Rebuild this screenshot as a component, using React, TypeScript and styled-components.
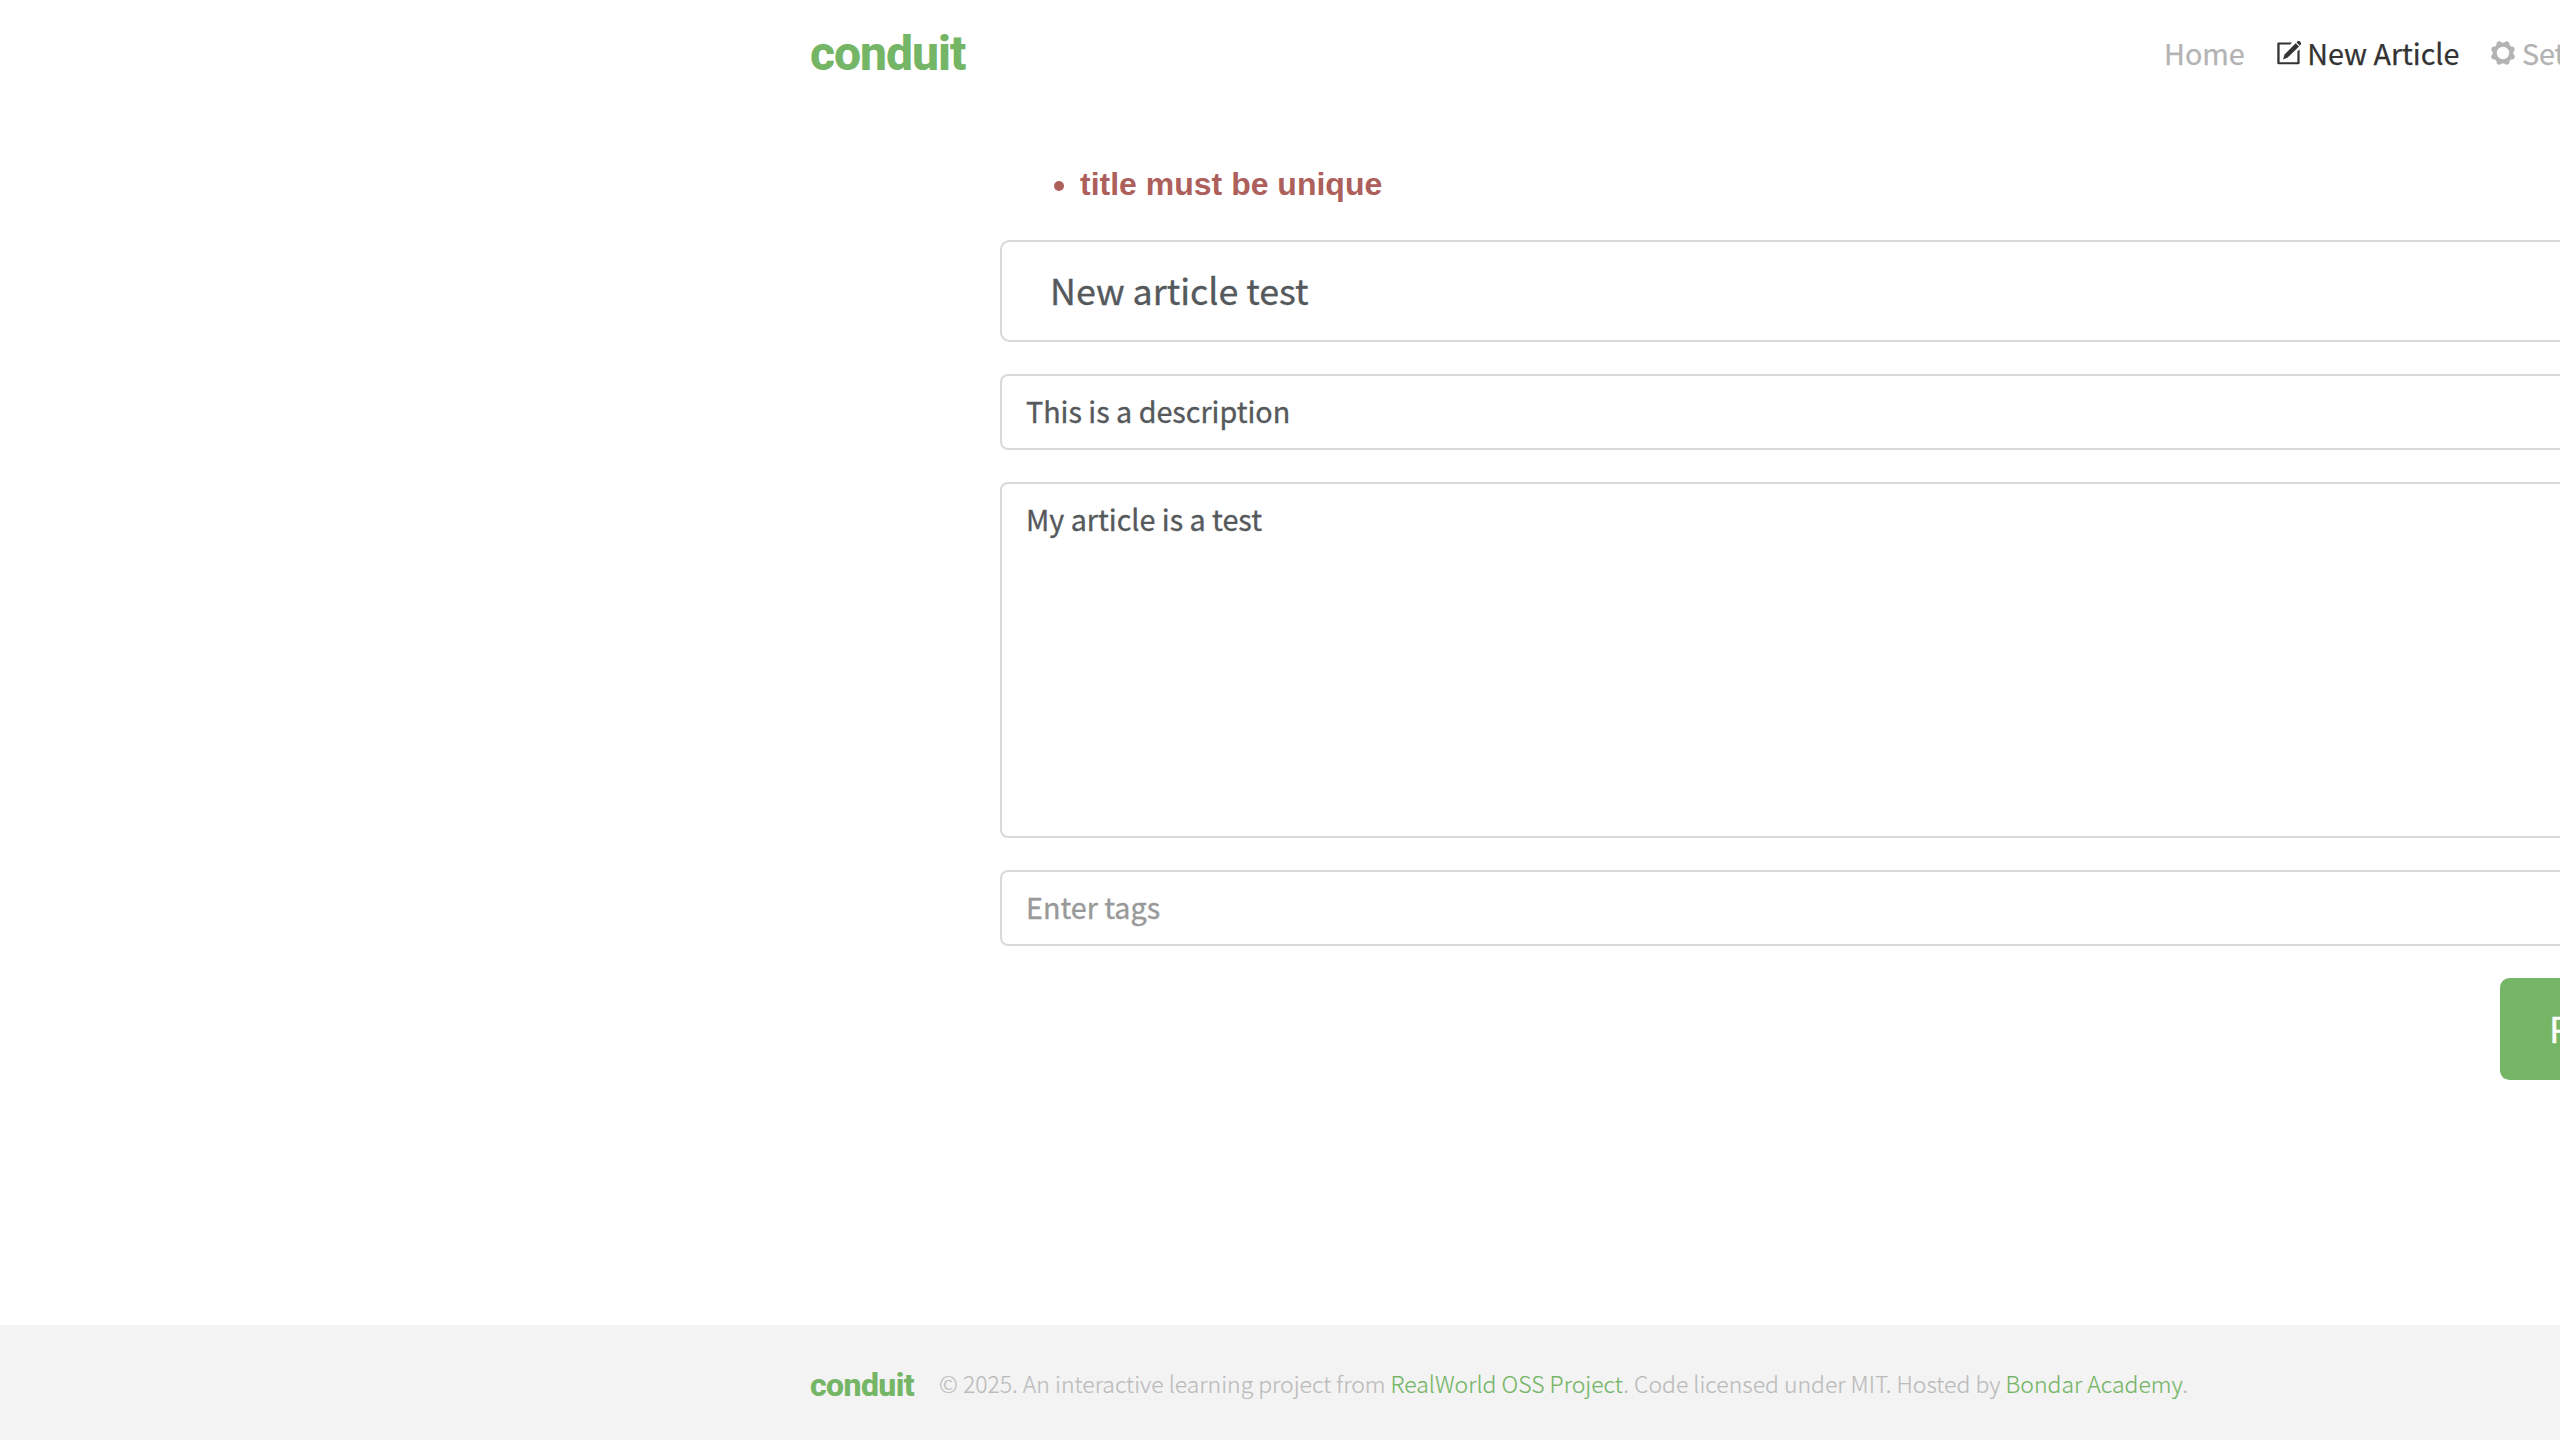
import React from 'react';
import styled, { createGlobalStyle } from 'styled-components';

const sans = `"Noto Sans CJK SC", "Noto Sans", sans-serif`;
const green = '#74b566';

const Global = createGlobalStyle`
  html, body { margin: 0; background: #fff; overflow: hidden; }
  *, *::before, *::after { box-sizing: border-box; }
`;

const Page = styled.div`
  width: 2560px;
  height: 1440px;
  overflow: hidden;
  display: flex;
  flex-direction: column;
  font-family: ${sans};
  font-size: 28.7px;
  line-height: 48px;
  color: #373a3c;
`;

const Container = styled.div<{ $grow?: boolean }>`
  width: 2280px;
  margin-left: 780px;
  padding: 0 30px;
  flex: ${p => (p.$grow ? '1 0 auto' : 'none')};
  display: flex;
`;

const Navbar = styled.nav`
  height: 144px;
  flex-shrink: 0;
  display: flex;
`;

const Brand = styled.a<{ $footer?: boolean }>`
  font-family: Roboto, sans-serif;
  font-weight: 800;
  color: ${green};
  font-size: ${p => (p.$footer ? 32 : 48)}px;
  letter-spacing: ${p => (p.$footer ? -0.6 : -1)}px;
  line-height: 48px;
  padding-top: ${p => (p.$footer ? 36 : 30)}px;
  width: ${p => (p.$footer ? 129 : 200)}px;
  flex-shrink: 0;
`;

const NavList = styled.ul`
  list-style: none;
  margin: 0 0 0 auto;
  padding: 29px 0 0;
  width: 866px;
  display: flex;
  gap: 32px;
`;

const NavItem = styled.li<{ $active?: boolean }>`
  display: flex;
  align-items: baseline;
  gap: 6.5px;
  white-space: nowrap;
  color: ${p => (p.$active ? '#333333' : '#b3b3b3')};
  -webkit-text-stroke: 0.25px currentColor;
`;

const Icon = styled.svg`
  width: 24px;
  height: 24px;
  flex-shrink: 0;
  align-self: flex-start;
  margin-top: 12px;
`;

const Editor = styled.main`
  width: 1840px;
  margin-left: 190px;
  flex: none;
  display: flex;
  flex-direction: column;
`;

const Errors = styled.ul`
  margin: 16px 0 32px;
  padding-left: 80px;
  font: 700 32px/48px "Liberation Sans", sans-serif;
  color: #ad5f5c;
`;

const Fields = styled.form`
  display: flex;
  flex-direction: column;
  gap: 32px;
`;

const Input = styled.input<{ $large?: boolean }>`
  display: block;
  width: 100%;
  height: ${p => (p.$large ? 102 : 76)}px;
  padding: ${p => (p.$large ? '0 48px 4px' : '0 24px 4px')};
  border: 2px solid #d9d9d9;
  border-radius: ${p => (p.$large ? 9.6 : 8)}px;
  background: #fff;
  color: #55595c;
  font-family: ${sans};
  font-size: ${p => (p.$large ? 35.8 : 28.7)}px;
  outline: none;
  -webkit-text-stroke: 0.35px currentColor;
  &::placeholder { color: #999; opacity: 1; }
`;

const TextArea = styled.textarea`
  display: block;
  width: 100%;
  height: 356px;
  padding: 11px 24px;
  border: 2px solid #d9d9d9;
  border-radius: 8px;
  background: #fff;
  color: #55595c;
  font-family: ${sans};
  font-size: 28.7px;
  line-height: 48px;
  resize: none;
  outline: none;
  -webkit-text-stroke: 0.35px currentColor;
`;

const Publish = styled.button`
  align-self: flex-end;
  width: 340px;
  height: 102px;
  padding: 0 0 4px 49px;
  border: 0;
  border-radius: 9.6px;
  background: ${green};
  color: #fff;
  text-align: left;
  white-space: nowrap;
  font-family: ${sans};
  font-size: 35.8px;
  -webkit-text-stroke: 0.35px currentColor;
`;

const Footer = styled.footer`
  height: 115px;
  flex-shrink: 0;
  background: #f3f3f3;
`;

const Attribution = styled.span`
  padding-top: 34px;
  font-size: 22.96px;
  font-weight: 300;
  color: #bbb;
  white-space: nowrap;
  -webkit-text-stroke: 0.15px currentColor;
`;

const Link = styled.a`
  color: ${green};
`;

const ComposeIcon = () => (
  <Icon viewBox="0 0 24 24" fill="currentColor">
    <path d="M15 1.4 13.2 3.4H2.6v17.8h17.8V10.4l2.2-2.2V22a1.3 1.3 0 0 1-1.3 1.3H1.6A1.3 1.3 0 0 1 .3 22V2.7a1.3 1.3 0 0 1 1.3-1.3z" />
    <path d="M18.7 2.2 22.1 5.6 10.7 16.6 6 18.4 7.5 13.4z" />
    <path d="M19.5 1.4 20.6.3a1.5 1.5 0 0 1 2.1 0l1.1 1.1a1.5 1.5 0 0 1 0 2.1L22.9 4.8z" />
  </Icon>
);

const GearIcon = () => (
  <Icon viewBox="0 0 24 24">
    <circle cx="12" cy="12" r="8.3" fill="none" stroke="currentColor" strokeWidth="4.2" />
    <g fill="currentColor">
      {[22.5, 67.5, 112.5, 157.5, 202.5, 247.5, 292.5, 337.5].map(a => (
        <path key={a} transform={`rotate(${a} 12 12)`} d="M8.4 3.2 10 .3Q10.3-.3 11-.3h2q.7 0 1 .6l1.6 2.9z" />
      ))}
    </g>
  </Icon>
);

export default function App() {
  return (
    <Page>
      <Global />
      <Navbar>
        <Container>
          <Brand>conduit</Brand>
          <NavList>
            <NavItem>Home</NavItem>
            <NavItem $active><ComposeIcon />New Article</NavItem>
            <NavItem><GearIcon />Settings</NavItem>
          </NavList>
        </Container>
      </Navbar>
      <Container $grow>
        <Editor>
          <Errors><li>title must be unique</li></Errors>
          <Fields>
            <Input $large defaultValue="New article test" />
            <Input defaultValue="This is a description" />
            <TextArea defaultValue="My article is a test" />
            <Input placeholder="Enter tags" />
            <Publish type="button">Publish Article</Publish>
          </Fields>
        </Editor>
      </Container>
      <Footer>
        <Container>
          <Brand $footer>conduit</Brand>
          <Attribution>
            © 2025. An interactive learning project from <Link>RealWorld OSS Project</Link>. Code licensed under MIT. Hosted by <Link>Bondar Academy</Link>.
          </Attribution>
        </Container>
      </Footer>
    </Page>
  );
}
